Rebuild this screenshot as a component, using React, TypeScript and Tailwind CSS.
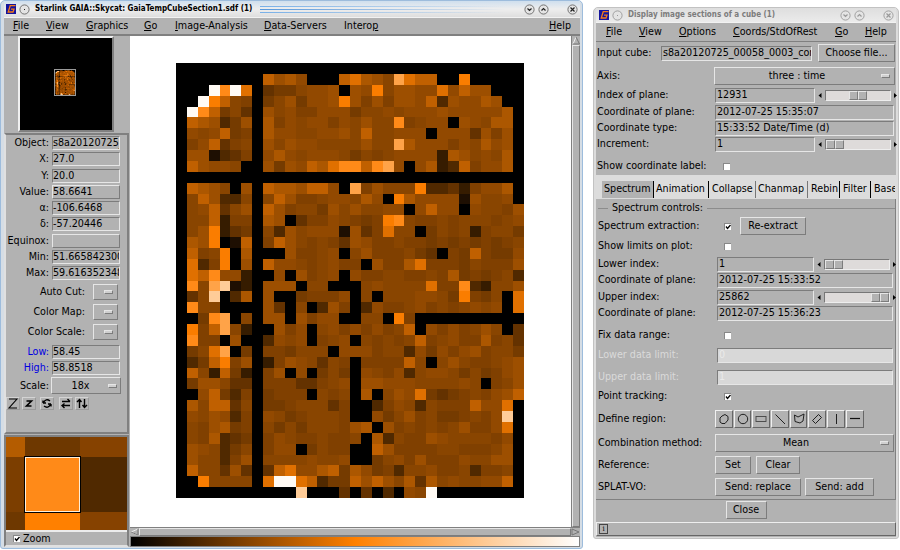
import React from "react";

const PIXELS = [
  "00000000000000000000000000000000",
  "00000000b9a8000bca97fcbb00d00000",
  "000hehc04557889098d79988c8b99000",
  "00hdb7605795889d9696998b3988a900",
  "0heb57409786688857787888988888a0",
  "0ba93590a68788687977e67880987aa0",
  "0878b560a88778897b77888088849690",
  "068b46709798877779" + "77fa888687a890",
  "0991346" + "08a878887" + "57678888" + "2a9787a0",
  "0b98870" + "09598bace" + "ebef808a" + "23b688a0",
  "00000000000000000000000000000000",
  "0ba9709" + "0baa9bb80" + "f69777d3" + "342688a0",
  "07b9337" + "07b966788" + "7a80da88" + "88197780",
  "078b479" + "0b9677597" + "9778808b" + "88087769",
  "077b266" + "0a9046687" + "656de766" + "76777678",
  "079d245" + "073978881" + "946c7705" + "76726775",
  "0a9d01b" + "06b976764" + "98667665" + "65656567",
  "0b67d0a" + "000966780" + "79666754" + "065b6558",
  "0c36d09" + "0b8876786" + "60966ac6" + "66576669",
  "0cbe882" + "008096780" + "86677667" + "6a565673",
  "0e7fg12" + "099907700" + "0787777c" + "66e32779",
  "047g03a" + "090056668" + "07077788" + "75d6570c",
  "0e77000" + "094070396" + "03866786" + "7678780c",
  "005ef07" + "099096880" + "0770d600" + "00000000",
  "0d6bf72" + "009680786" + "86867b08" + "68679704",
  "0e66090" + "038780678" + "076767b6" + "7866a674",
  "057cf05" + "066577708" + "88677385" + "86896775",
  "035bd69" + "026987476" + "06666b70" + "79766789",
  "0b72b52" + "069080575" + "08768378" + "87575689",
  "0599744" + "066644678" + "09988877" + "77870679",
  "008b536" + "056660767" + "0a0798c5" + "4567689b",
  "0a7bb47" + "055677746" + "00368737" + "666b88c0",
  "0879836" + "087567776" + "00857967" + "556768g0",
  "0769a56" + "075757776" + "9a096767" + "679668c0",
  "076a345" + "068766766" + "70a37669" + "87777680",
  "0987357" + "068805766" + "00b96666" + "77666790",
  "0977369" + "077778778" + "00578696" + "66877990",
  "0b77494" + "04bc88ab5" + "a8563778" + "66736670",
  "00d7777" + "0chhcb355" + "b9b97a4a" + "787788b0",
  "00000000000g0004" + "0403087h00000000",
];

const RAMP: Record<string, string> = {
  "0": "#000000", "1": "#1e0f02", "2": "#361c00", "3": "#502900", "4": "#643200", "5": "#753b00",
  "6": "#804000", "7": "#894500", "8": "#924900", "9": "#9d4f00", a: "#ac5700", b: "#c06000",
  c: "#e07000", d: "#fa7d00", e: "#ff8a18", f: "#ffa348", g: "#ffcc98", h: "#fffaf4",
};

function CubeSlice({ className, smooth }: { className: string; smooth?: boolean }) {
  return (
    <svg viewBox="0 0 32 40" preserveAspectRatio="none" shapeRendering={smooth ? "auto" : "crispEdges"} className={className}>
      <rect width="32" height="40" fill="#000" />
      {PIXELS.map((row, y) =>
        row.split("").map((c, x) => (c === "0" ? null : <rect key={x + "-" + y} x={x} y={y} width={smooth ? 1.3 : 1} height={smooth ? 1.3 : 1} fill={RAMP[c]} />)),
      )}
    </svg>
  );
}

const raised = "border border-t-[#e6e6e6] border-l-[#e6e6e6] border-b-[#7c7c7c] border-r-[#7c7c7c] ";
const sunken = "border border-t-[#7c7c7c] border-l-[#7c7c7c] border-b-[#e6e6e6] border-r-[#e6e6e6] ";

function Logo() {
  return (
    <svg width="10" height="10" viewBox="0 0 10 10">
      <rect width="10" height="10" fill="#14149c" />
      <path d="M9.500 1.700H4.200L2.200 8H7L8 5.200H5" fill="none" stroke="#f57a18" strokeWidth="1.3" />
    </svg>
  );
}

function RoundButton({ d, dim }: { d: string; dim?: boolean }) {
  return (
    <svg width="11" height="11" viewBox="0 0 11 11" className="shrink-0">
      <circle cx="5.5" cy="5.5" r="4.6" fill="#e4e4e4" stroke={dim ? "#999" : "#666"} strokeWidth="0.9" />
      <path d={d} fill="none" stroke={dim ? "#999" : "#222"} strokeWidth="1.2" />
    </svg>
  );
}
const DOT = "M5 5.5h1";
const DOWN = "M3.5 4.5l2 2 2-2";
const UP = "M3.5 6.5l2-2 2 2";
const CROSS = "M3.5 3.5l4 4M7.5 3.5l-4 4";

function MenuLabel({ text, at = 0 }: { text: string; at?: number }) {
  return (
    <span>
      {text.slice(0, at)}
      <span className="underline underline-offset-1">{text[at]}</span>
      {text.slice(at + 1)}
    </span>
  );
}

function Check({ on }: { on?: boolean }) {
  return (
    <span className="flex h-[7px] w-[7px] shrink-0 border-t border-l border-[#888] bg-white">
      {on && (
        <svg width="6" height="6" viewBox="0 0 6 6">
          <path d="M1 2.5L2.5 4.5L5.5 1" fill="none" stroke="#000" strokeWidth="1.3" />
        </svg>
      )}
    </span>
  );
}

function Dash() {
  return <span className={raised + "h-[4px] w-[9px] shrink-0 bg-[#d0d0d0]"} />;
}

function SideField({ label, value, margin = "mt-[2.3px]", blue, box = "sunken" }: { label: string; value: string; margin?: string; blue?: boolean; box?: string }) {
  return (
    <div className={"flex h-[14px] shrink-0 items-center " + margin}>
      <span className={"flex w-[43px] shrink-0 justify-end whitespace-nowrap " + (blue ? "text-[#0000e0]" : "")}>{label}</span>
      <span className={(box === "sunken" ? sunken : raised) + "ml-[3px] flex h-[14px] w-[68px] items-center overflow-hidden whitespace-nowrap"}>{value}</span>
    </div>
  );
}

function SideOption({ label, margin }: { label: string; margin: string }) {
  return (
    <div className={"flex h-[16px] shrink-0 items-center justify-end pr-[9px] " + margin}>
      <span className="mr-[8px]">{label}</span>
      <span className={raised + "flex h-[16px] w-[25px] items-center justify-end pr-[4px]"}><Dash /></span>
    </div>
  );
}

function Tool({ children, margin = "" }: { children: React.ReactNode; margin?: string }) {
  return (
    <span className={"flex h-[13px] w-[14px] items-center justify-center border border-t-[#d4d4d4] border-l-[#d4d4d4] border-b-[#9a9a9a] border-r-[#9a9a9a] " + margin}>
      <svg width="12" height="11" viewBox="0 0 12 11" fill="none" stroke="#000" strokeWidth="1.4">{children}</svg>
    </span>
  );
}

const titleFont = "[font-family:'DejaVu_Sans_Condensed','DejaVu_Sans',sans-serif] [font-stretch:condensed] text-[8px] font-bold whitespace-nowrap ";

function MainWindow() {
  return (
    <section className="flex h-[549px] w-[583px] shrink-0 flex-col rounded-t-[5px] rounded-b-[3px] border border-[#9dbcdc] bg-[#d5dde5] pr-[2px] pl-[3px]">
      <header className="flex h-[16px] shrink-0 items-center bg-gradient-to-b from-[#cfdfee] via-[#eeeeee] to-[#dedede] pl-[2px]">
        <Logo />
        <span className="ml-[3px] flex"><RoundButton d={DOT} /></span>
        <h1 className={titleFont + "ml-[5px] w-[219px] shrink-0"}>Starlink GAIA::Skycat: GaiaTempCubeSection1.sdf (1)</h1>
        <span className="mr-[18px] ml-[6px] flex h-[7px] flex-1 flex-col justify-between">
          <i className="h-px bg-gradient-to-r from-[#78b0e8] to-transparent" />
          <i className="h-px bg-gradient-to-r from-[#5898dc] to-transparent" />
          <i className="h-px bg-gradient-to-r from-[#78b0e8] to-transparent" />
        </span>
        <span className="mr-[2px] flex">
          <RoundButton d={DOWN} />
          <span className="ml-[3px] flex"><RoundButton d={UP} /></span>
          <span className="ml-[18px] flex"><RoundButton d={CROSS} /></span>
        </span>
      </header>
      <nav className="flex h-[19px] shrink-0 items-center border-t border-b-2 border-t-[#f2f2f2] border-b-[#808080] bg-[#b2b2b2] pl-[9px]">
        <span className="w-[33px]"><MenuLabel text="File" /></span>
        <span className="w-[40px]"><MenuLabel text="View" /></span>
        <span className="w-[58px]"><MenuLabel text="Graphics" /></span>
        <span className="w-[31px]"><MenuLabel text="Go" /></span>
        <span className="w-[89px]"><MenuLabel text="Image-Analysis" /></span>
        <span className="w-[80px]"><MenuLabel text="Data-Servers" /></span>
        <span className="flex-1"><MenuLabel text="Interop" at={6} /></span>
        <span className="pr-[9px]"><MenuLabel text="Help" /></span>
      </nav>
      <div className="flex h-[511px] shrink-0 bg-[#b2b2b2]">
        <aside className="flex w-[126px] shrink-0 flex-col">
          <div className="flex h-[96px] shrink-0 justify-center pr-[2px]">
            <div className="flex h-[96px] w-[96px] items-center justify-center border-2 border-t-[#f0f0f0] border-l-[#f0f0f0] border-r-[#808080] border-b-[#808080] bg-black">
              <div className="mr-[2px] mb-[3px] h-[27px] w-[22px] border border-[#9a9a9a]"><CubeSlice smooth className="block h-[25px] w-[20px] brightness-140" /></div>
            </div>
          </div>
          <div className="mt-px flex h-[301px] w-[125px] shrink-0 flex-col border-2 border-t-[#808080] border-r-[#808080] border-b-[#808080] border-l-[#e0e0e0]">
            <SideField label="Object:" value="s8a20120725_" margin="mt-px" />
            <SideField label="X:" value="27.0" />
            <SideField label="Y:" value="20.0" />
            <SideField label="Value:" value="58.6641" box="raised" />
            <SideField label="α:" value="-106.6468" />
            <SideField label="δ:" value="-57.20446" />
            <SideField label="Equinox:" value="" box="raised" />
            <SideField label="Min:" value="51.6658423000" />
            <SideField label="Max:" value="59.6163523480" />
            <SideOption label="Auto Cut:" margin="mt-[4px]" />
            <SideOption label="Color Map:" margin="mt-[4px]" />
            <SideOption label="Color Scale:" margin="mt-[4px]" />
            <SideField label="Low:" value="58.45" margin="mt-[5px]" blue />
            <SideField label="High:" value="58.8518" margin="mt-[2px]" blue />
            <div className="mt-[2px] flex h-[17px] shrink-0 items-center">
              <span className="flex w-[43px] justify-end">Scale:</span>
              <span className={raised + "ml-[2px] flex h-[17px] w-[70px] items-center pr-[3px]"}>
                <span className="flex-1 pl-[1px] text-center">18x</span><Dash />
              </span>
            </div>
            <div className="mt-[3px] flex">
              <Tool><path d="M2 1h8L2 10h8" strokeWidth="1.1" /></Tool>
              <Tool margin="ml-[2px]"><path d="M3.5 3h5L3.5 8h5" strokeWidth="1.6" /></Tool>
              <Tool margin="ml-[4px]"><path d="M2 5V2.5M2 5H5M2.5 4.5Q5 0 9 3M10 6V8.500M10 6H7M9.500 6.500Q7 11 3 8" /></Tool>
              <Tool margin="ml-[5px]"><path d="M2 3.500H10M7.500 1L10 3.500M10 7.500H2M4.500 5.500L2 7.500L4.500 10" /></Tool>
              <Tool margin="ml-[2px]"><path d="M3.500 10V1.500M1 4L3.500 1.500L5.500 4M8.500 1V9.500M6.500 7L8.500 9.500L11 7" /></Tool>
            </div>
          </div>
          <div className="mt-px flex h-[112px] w-[125px] shrink-0 flex-col border-2 border-t-[#808080] border-r-[#808080] border-b-[#e0e0e0] border-l-[#808080]">
            <svg width="121" height="93" viewBox="1 0 121 93" shapeRendering="crispEdges" className="block shrink-0">
              <rect width="122" height="93" fill="#864200" />
              <rect width="20" height="20" fill="#b45c00" />
              <rect x="20" width="55" height="20" fill="#6e3800" />
              <rect y="20" width="20" height="55" fill="#7c3e00" />
              <rect y="75" width="20" height="18" fill="#6e3800" />
              <rect x="75" y="20" width="47" height="55" fill="#502900" />
              <rect x="20" y="75" width="55" height="18" fill="#ff8000" />
              <rect x="19" y="19" width="57" height="57" fill="#000" />
              <rect x="20" y="20" width="55" height="55" fill="#ffefd8" />
              <rect x="21" y="21" width="53" height="53" fill="#ff8a18" />
            </svg>
            <div className="flex flex-1 items-center border-t-2 border-[#ececec] pl-[7px]">
              <Check on /><span className="ml-[3px]">Zoom</span>
            </div>
          </div>
        </aside>
        <div className="flex flex-1 flex-col">
          <div className="flex h-[491px] shrink-0">
            <div className="flex-1 bg-white pt-[27px] pl-[46px]">
              <CubeSlice className="block h-[435px] w-[348px]" />
            </div>
            <div className="flex w-[9px] flex-col items-center border-l border-[#808080] bg-[#b2b2b2]">
              <svg width="8" height="9" viewBox="0 0 8 9"><path d="M4 1L1 8" stroke="#eee" /><path d="M4 1L7.500 8H1" fill="none" stroke="#777" /></svg>
              <span className={raised + "w-[8px] flex-1"} />
            </div>
          </div>
          <div className="flex h-[9px] shrink-0 border-t border-[#808080]">
            <svg width="9" height="8" viewBox="0 0 9 8"><path d="M8 1L1 4L8 7" fill="none" stroke="#eee" /><path d="M8 1V7L1 4" fill="none" stroke="#777" /></svg>
            <span className={raised + "flex-1"} />
            <svg width="9" height="8" viewBox="0 0 9 8"><path d="M1 1L8 4L1 7Z" fill="none" stroke="#777" /></svg>
          </div>
          <div className="flex h-[11px] shrink-0 border border-[#808080] bg-[linear-gradient(90deg,#000,#ff8000_50%,#fff)]" />
        </div>
      </div>
    </section>
  );
}

function Row({ label, margin, height = "h-[14px]", dim, children }: { label: string; margin: string; height?: string; dim?: boolean; children?: React.ReactNode }) {
  return (
    <div className={"flex shrink-0 items-center " + margin + " " + height}>
      <span className={"w-[119px] shrink-0 whitespace-nowrap " + (dim ? "text-[#dadada]" : "")}>{label}</span>
      {children}
    </div>
  );
}

function Entry({ value, width }: { value: string; width: string }) {
  return <span className={sunken + "flex h-[15px] shrink-0 items-center overflow-hidden pl-px whitespace-nowrap " + width}>{value}</span>;
}

function Slider({ knob }: { knob: string }) {
  return (
    <span className="flex shrink-0 items-center">
      <svg width="4" height="5" viewBox="0 0 4 5" className="ml-[3px]"><path d="M3.500 0V5L0.500 2.500Z" /></svg>
      <span className="ml-[3px] flex h-[11px] w-[66px] items-center border border-t-[#777] border-l-[#777] border-b-[#eee] border-r-[#eee] bg-[#dedbda]">
        <span className={"flex h-[9px] w-[18px] " + knob}>
          <i className={raised + "flex-1 bg-[#b2b2b2]"} /><i className={raised + "flex-1 bg-[#b2b2b2]"} />
        </span>
      </span>
      <svg width="3" height="5" viewBox="0 0 3 5" className="ml-[3px]"><path d="M0 0V5L3 2.500Z" /></svg>
    </span>
  );
}

function Push({ text, size }: { text: string; size: string }) {
  return <button className={raised + "flex shrink-0 items-center justify-center whitespace-nowrap " + size}>{text}</button>;
}

function RegionButton({ children }: { children: React.ReactNode }) {
  return (
    <span className="mr-px flex h-[18px] w-[17.700px] items-center justify-center border border-t-[#f0f0f0] border-l-[#f0f0f0] border-r-[#666] border-b-[#666]">
      <svg width="14" height="14" viewBox="0 0 14 14" fill="none" stroke="#111" strokeWidth="0.9">{children}</svg>
    </span>
  );
}

function CubeWindow() {
  return (
    <section className="mt-[7px] ml-[10px] flex h-[532px] w-[306px] shrink-0 flex-col rounded-t-[5px] rounded-b-[3px] border border-[#c2c2c2] bg-[#dcdcdc] px-[2px]">
      <header className="flex h-[14px] shrink-0 items-center bg-gradient-to-b from-[#dedede] to-[#ebebeb] pl-[3px]">
        <Logo />
        <span className="ml-[3px] flex"><RoundButton d={DOT} dim /></span>
        <h2 className={titleFont + "ml-[5px] flex-1 text-[#7c7c7c]"}>Display image sections of a cube (1)</h2>
        <span className="mr-[2px] flex">
          <RoundButton d={DOWN} dim />
          <span className="ml-[3px] flex"><RoundButton d={UP} dim /></span>
          <span className="ml-[18px] flex"><RoundButton d={CROSS} dim /></span>
        </span>
      </header>
      <nav className="flex h-[20px] shrink-0 items-center border-t border-b border-t-[#f2f2f2] border-b-[#808080] bg-[#b2b2b2] pl-[10px]">
        <span className="w-[33px]"><MenuLabel text="File" /></span>
        <span className="w-[40px]"><MenuLabel text="View" /></span>
        <span className="w-[54px]"><MenuLabel text="Options" /></span>
        <span className="w-[102px] whitespace-nowrap"><MenuLabel text="Coords/StdOfRest" /></span>
        <span className="w-[30px]"><MenuLabel text="Go" /></span>
        <span><MenuLabel text="Help" /></span>
      </nav>
      <div className="flex h-[133px] shrink-0 flex-col bg-[#b2b2b2] pl-px">
        <div className="mt-[2px] flex h-[18px] shrink-0 items-center">
          <span className="w-[64px] whitespace-nowrap">Input cube:</span>
          <Entry value="s8a20120725_00058_0003_cor" width="w-[151px]" />
          <span className="ml-[6px] flex"><Push text="Choose file..." size="h-[18px] w-[77px]" /></span>
        </div>
        <Row label="Axis:" margin="mt-[5px]" height="h-[18px]">
          <span className={raised + "-ml-[2px] flex h-[18px] w-[181px] items-center pr-[4px]"}><span className="flex-1 pr-[2px] text-center">three : time</span><Dash /></span>
        </Row>
        <Row label="Index of plane:" margin="mt-[3px]"><span className="-ml-px flex"><Entry value="12931" width="w-[100px]" /></span><Slider knob="ml-[23px]" /></Row>
        <Row label="Coordinate of plane:" margin="mt-[3px]"><span className="-ml-px flex"><Entry value="2012-07-25 15:35:07" width="w-[179px]" /></span></Row>
        <Row label="Coordinate type:" margin="mt-[2px]"><span className="-ml-px flex"><Entry value="15:33:52 Date/Time (d)" width="w-[179px]" /></span></Row>
        <Row label="Increment:" margin="mt-[2px]"><span className="-ml-px flex"><Entry value="1" width="w-[100px]" /></span><Slider knob="ml-0" /></Row>
        <Row label="Show coordinate label:" margin="mt-[8px]"><span className="ml-[7px]"><Check /></span></Row>
      </div>
      <div className="mt-[6px] ml-[6px] flex h-[17px] w-[293px] shrink-0 items-stretch overflow-hidden leading-[16px] whitespace-nowrap">
        <span className="w-[52px] shrink-0 border-r border-black bg-[#b2b2b2] pl-[2px]">Spectrum</span>
        <span className="w-[55px] shrink-0 border-r border-black pl-[2px]">Animation</span>
        <span className="w-[47px] shrink-0 border-r border-[#777] pl-[3px]">Collapse</span>
        <span className="w-[52px] shrink-0 border-r border-[#777] pl-[2px]">Chanmap</span>
        <span className="w-[32px] shrink-0 border-r border-black pl-[3px]">Rebin</span>
        <span className="w-[31px] shrink-0 border-r border-black pl-[3px]">Filter</span>
        <span className="shrink-0 pl-[3px]">Base</span>
      </div>
      <div className="mt-px flex h-[301px] shrink-0 flex-col border-r border-b border-[#808080] bg-[#b2b2b2] pl-[2px]">
        <div className="flex h-[18px] shrink-0 items-center">
          <i className="h-px w-[10px] bg-[#8c8c8c]" />
          <span className="mx-[4px] whitespace-nowrap">Spectrum controls:</span>
          <i className="h-px flex-1 bg-[#8c8c8c]" />
        </div>
        <Row label="Spectrum extraction:" margin="mt-0" height="h-[18px]"><span className="ml-[7px]"><Check on /></span><span className="ml-[9px] flex"><Push text="Re-extract" size="h-[18px] w-[66px]" /></span></Row>
        <Row label="Show limits on plot:" margin="mt-[4px]"><span className="ml-[7px]"><Check /></span></Row>
        <Row label="Lower index:" margin="mt-[4px]"><Entry value="1" width="w-[97px]" /><Slider knob="ml-0" /></Row>
        <Row label="Coordinate of plane:" margin="mt-[2px]"><Entry value="2012-07-25 15:33:52" width="w-[176px]" /></Row>
        <Row label="Upper index:" margin="mt-[3px]"><Entry value="25862" width="w-[97px]" /><Slider knob="ml-[46px]" /></Row>
        <Row label="Coordinate of plane:" margin="mt-[2px]"><Entry value="2012-07-25 15:36:23" width="w-[176px]" /></Row>
        <Row label="Fix data range:" margin="mt-[8px]"><span className="ml-[7px]"><Check /></span></Row>
        <Row label="Lower data limit:" margin="mt-[6px]" dim><span className={sunken + "flex h-[15px] w-[176px] items-center bg-[#d8d8d8] pl-px text-[#eaeaea]"}>0</span></Row>
        <Row label="Upper data limit:" margin="mt-[8px]" dim><span className={sunken + "flex h-[15px] w-[176px] items-center bg-[#d8d8d8] pl-px text-[#eaeaea]"}>1</span></Row>
        <Row label="Point tracking:" margin="mt-[5px]"><span className="ml-[7px]"><Check on /></span></Row>
        <Row label="Define region:" margin="mt-[7px]" height="h-[18px]">
          <span className="-ml-[2px] flex">
            <RegionButton><path d="M5 4L8 2.500L11 4.500V8L8 11.500H5L3 10V6Z" /></RegionButton>
            <RegionButton><circle cx="7" cy="7" r="4.700" /></RegionButton>
            <RegionButton><rect x="2" y="4.500" width="10" height="5" stroke="#444" /></RegionButton>
            <RegionButton><path d="M2.500 2.500L12 12" /></RegionButton>
            <RegionButton><path d="M2.500 3L6 5L12 2L11 9L8 11L3 9.500Z" /></RegionButton>
            <RegionButton><path d="M8.500 2.500L11.500 5.500L5.500 11.500L2.500 8.500Z" /></RegionButton>
            <RegionButton><path d="M7.500 2V12" /></RegionButton>
            <RegionButton><path d="M2 6.500H12" strokeWidth="1.200" /></RegionButton>
          </span>
        </Row>
        <Row label="Combination method:" margin="mt-[6px]" height="h-[18px]">
          <span className={raised + "-ml-[2px] flex h-[18px] w-[179px] items-center pr-[4px]"}><span className="flex-1 pr-[4px] text-center">Mean</span><Dash /></span>
        </Row>
        <Row label="Reference:" margin="mt-[4px]" height="h-[18px]"><span className="-ml-[2px] flex gap-[5px]"><Push text="Set" size="h-[18px] w-[36px]" /><Push text="Clear" size="h-[18px] w-[44px]" /></span></Row>
        <Row label="SPLAT-VO:" margin="mt-[4px]" height="h-[18px]"><span className="-ml-[2px] flex gap-[4px]"><Push text="Send: replace" size="h-[18px] w-[86px]" /><Push text="Send: add" size="h-[18px] w-[69px]" /></span></Row>
      </div>
      <div className="flex h-[37px] shrink-0 flex-col bg-[#b2b2b2]">
        <div className="flex justify-center pt-px"><Push text="Close" size="h-[18px] w-[41px]" /></div>
        <div className="mt-[3px] flex h-[14px] items-center border border-t-[#eee] border-l-[#eee] border-r-[#666] border-b-[#666] pl-[2px]">
          <span className="flex h-[10px] w-[9px] items-center justify-center border border-[#444] font-['DejaVu_Serif',serif] text-[7px]">i</span>
        </div>
      </div>
    </section>
  );
}

export default function App() {
  return (
    <main className="flex h-[550px] w-[900px] overflow-hidden bg-white font-['DejaVu_Sans',sans-serif] text-[9.6px] leading-[12px] text-black">
      <MainWindow />
      <CubeWindow />
    </main>
  );
}
